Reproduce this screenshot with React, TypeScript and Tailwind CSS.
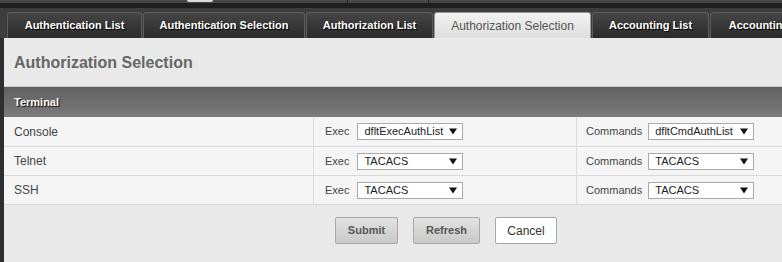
import React from 'react'

const TABS = [
  { label: 'Authentication List', w: 'w-[135px]' },
  { label: 'Authentication Selection', w: 'w-[162px]' },
  { label: 'Authorization List', w: 'w-[127px]' },
  { label: 'Authorization Selection', w: 'w-[157px]', active: true },
  { label: 'Accounting List', w: 'w-[117px]' },
  { label: 'Accounting Selection', w: 'w-[150px]' },
]

const ROWS = [
  { name: 'Console', exec: 'dfltExecAuthList', cmd: 'dfltCmdAuthList' },
  { name: 'Telnet', exec: 'TACACS', cmd: 'TACACS' },
  { name: 'SSH', exec: 'TACACS', cmd: 'TACACS' },
]

function FakeSelect({ value }: { value: string }) {
  return (
    <div className="flex items-center justify-between w-[106px] h-[17px] bg-white border border-[#a9a9a9] pl-[6px] pr-[5px] text-[11px] text-[#222] leading-none">
      <span>{value}</span>
      <svg width="8" height="7" viewBox="0 0 8 7" className="shrink-0">
        <path d="M0 0.5h8L4 6.5z" fill="#111" />
      </svg>
    </div>
  )
}

export default function App() {
  return (
    <div className="w-[782px] h-[262px] overflow-hidden bg-[#2e2e2e] font-['Liberation_Sans',Arial,sans-serif]">
      {/* top nav remnant */}
      <div className="relative h-[3px] bg-[#474747]">
        <div className="absolute left-[187px] top-0 w-[26px] h-[2px] rounded-b bg-[#d8d8d8]" />
        <div className="absolute left-[347px] top-0 w-px h-[3px] bg-[#222]" />
        <div className="absolute left-[428px] top-0 w-px h-[3px] bg-[#222]" />
      </div>
      <div className="h-[5px] bg-[#1f1f1f]" />
      <div className="flex h-[30px] bg-[#3d3d3d] pl-[7px] pt-[4px] gap-px items-end">
        {TABS.map(t => (
          <div
            key={t.label}
            className={`${t.w} shrink-0 h-[26px] rounded-t-[3px] border border-b-0 flex items-center justify-center whitespace-nowrap ${
              t.active
                ? 'bg-gradient-to-b from-[#f2f2f2] to-[#dedede] border-[#9a9a9a] text-[#555] text-[12px]'
                : 'bg-gradient-to-b from-[#454545] to-[#2b2b2b] border-[#5c5c5c] text-white text-[11px] font-bold [text-shadow:1px_1px_1px_#000]'
            }`}
          >
            {t.label}
          </div>
        ))}
      </div>

      <div className="ml-[4px] w-[884px] bg-[#e9e9e9] h-[224px]">
        <div className="h-[49px] flex items-center pl-[10px] pt-[2px] border-b border-[#c9c9c9]">
          <h1 className="text-[16px] font-bold text-[#666]">Authorization Selection</h1>
        </div>
        <div className="h-[30px] flex items-center pl-[10px] bg-gradient-to-b from-[#606060] to-[#7c7c7c] text-white text-[11px] font-bold [text-shadow:1px_1px_1px_#000]">
          Terminal
        </div>
        <div>
          {ROWS.map((r, i) => (
            <div
              key={r.name}
              className={`grid grid-cols-[310px_263px_1fr] bg-[#f5f5f5] border-b border-[#d9d9d9] text-[#444] ${
                i === 0 ? 'h-[30px]' : 'h-[29px]'
              }`}
            >
              <div className="flex items-center pl-[10px] border-r border-[#dcdcdc] text-[12px]">{r.name}</div>
              <div className="flex items-center pl-[11px] gap-[8px] border-r border-[#dcdcdc] text-[11px]">
                <span>Exec</span>
                <FakeSelect value={r.exec} />
              </div>
              <div className="flex items-center pl-[9px] gap-[6px] text-[11px]">
                <span>Commands</span>
                <FakeSelect value={r.cmd} />
              </div>
            </div>
          ))}
        </div>
        <div className="flex justify-center gap-[15px] pt-[12px]">
          <button className="w-[63px] h-[27px] rounded-[2px] border border-[#a8a8a8] bg-gradient-to-b from-[#e2e2e2] to-[#c9c9c9] text-[11px] font-bold text-[#555]">
            Submit
          </button>
          <button className="w-[67px] h-[27px] rounded-[2px] border border-[#a8a8a8] bg-gradient-to-b from-[#e2e2e2] to-[#c9c9c9] text-[11px] font-bold text-[#555]">
            Refresh
          </button>
          <button className="w-[62px] h-[27px] rounded-[2px] border border-[#a8a8a8] bg-white text-[12px] text-[#333]">
            Cancel
          </button>
        </div>
      </div>
    </div>
  )
}
